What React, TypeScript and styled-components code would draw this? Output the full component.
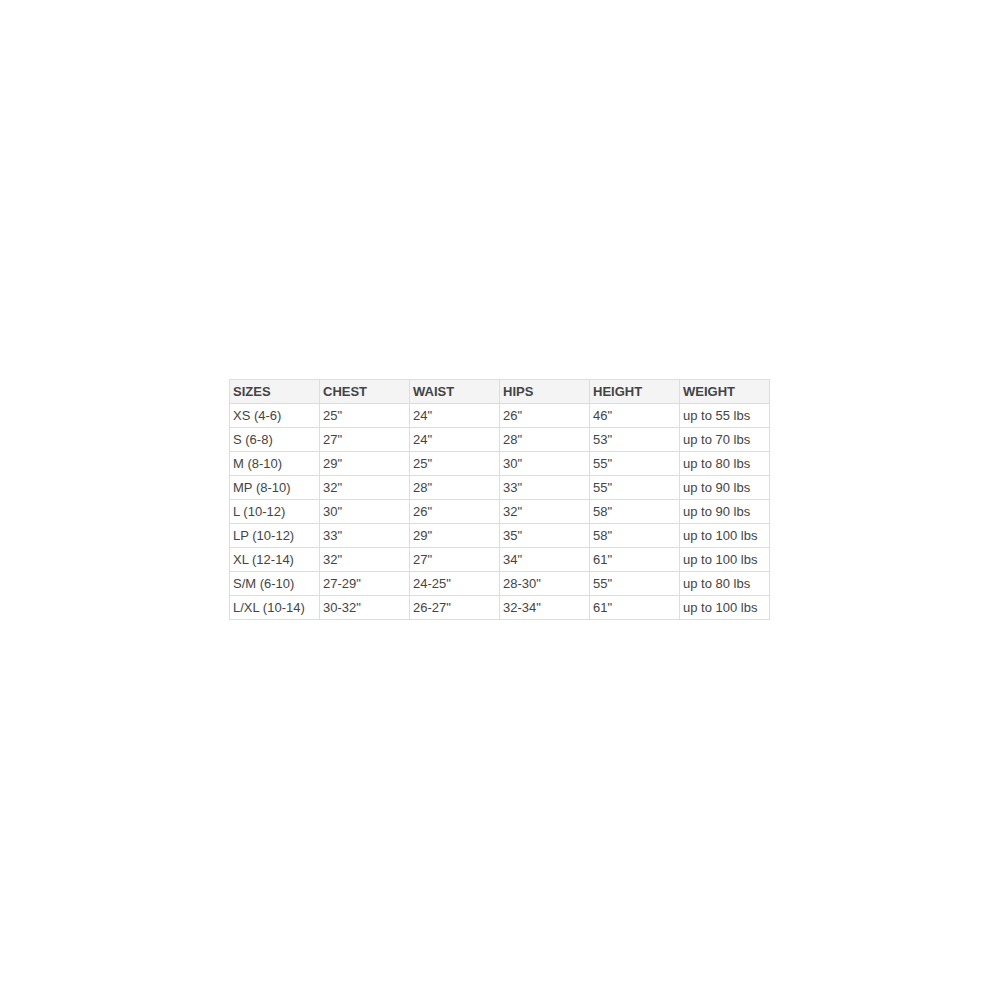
import React from "react";
import styled, { createGlobalStyle } from "styled-components";

const Global = createGlobalStyle`
  html, body { margin: 0; padding: 0; background: #fff; }
`;

const Page = styled.div`
  width: 1000px;
  height: 1000px;
  display: flex;
  align-items: center;
  justify-content: center;
  background: #fff;
`;

const Table = styled.table`
  border-collapse: collapse;
  table-layout: fixed;
  width: 541px;
  margin-left: -1px;
  margin-top: -1px;
  font-family: "Liberation Sans", Arial, sans-serif;
  font-size: 13px;
  color: #444;
`;

const Th = styled.th`
  border: 1px solid #ddd;
  background: #f4f4f4;
  height: 24px;
  padding: 0 0 0 3px;
  text-align: left;
  font-weight: bold;
  color: #444;
  box-sizing: border-box;
`;

const Td = styled.td`
  border: 1px solid #ddd;
  height: 24px;
  padding: 0 0 0 3px;
  text-align: left;
  white-space: nowrap;
  box-sizing: border-box;
`;

const headers = ["SIZES", "CHEST", "WAIST", "HIPS", "HEIGHT", "WEIGHT"];
const rows = [
  ["XS (4-6)", '25"', '24"', '26"', '46"', "up to 55 lbs"],
  ["S (6-8)", '27"', '24"', '28"', '53"', "up to 70 lbs"],
  ["M (8-10)", '29"', '25"', '30"', '55"', "up to 80 lbs"],
  ["MP (8-10)", '32"', '28"', '33"', '55"', "up to 90 lbs"],
  ["L (10-12)", '30"', '26"', '32"', '58"', "up to 90 lbs"],
  ["LP (10-12)", '33"', '29"', '35"', '58"', "up to 100 lbs"],
  ["XL (12-14)", '32"', '27"', '34"', '61"', "up to 100 lbs"],
  ["S/M (6-10)", '27-29"', '24-25"', '28-30"', '55"', "up to 80 lbs"],
  ["L/XL (10-14)", '30-32"', '26-27"', '32-34"', '61"', "up to 100 lbs"],
];

export default function App() {
  return (
    <>
      <Global />
      <Page>
        <Table>
          <colgroup>
            {headers.map((h) => (
              <col key={h} style={{ width: 90 }} />
            ))}
          </colgroup>
          <thead>
            <tr>
              {headers.map((h) => (
                <Th key={h}>{h}</Th>
              ))}
            </tr>
          </thead>
          <tbody>
            {rows.map((r) => (
              <tr key={r[0]}>
                {r.map((c, i) => (
                  <Td key={i}>{c}</Td>
                ))}
              </tr>
            ))}
          </tbody>
        </Table>
      </Page>
    </>
  );
}
